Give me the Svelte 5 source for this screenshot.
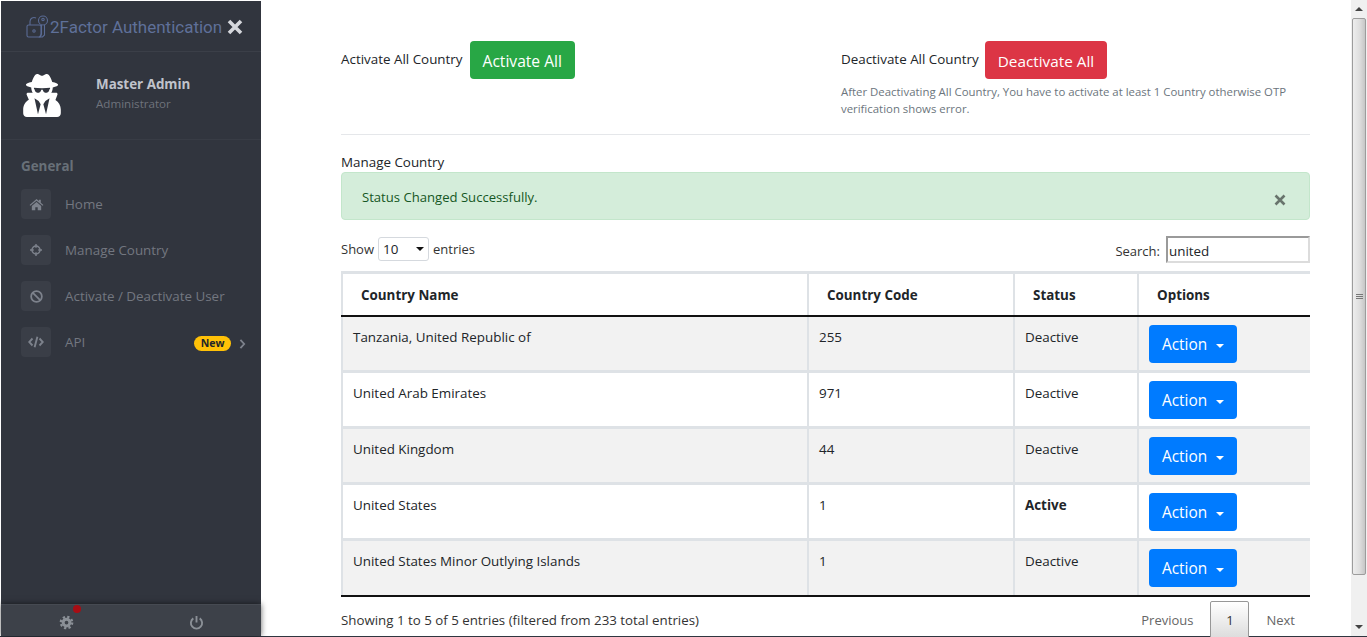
<script>
  const rows = [
    { name: 'Tanzania, United Republic of', code: '255', active: false },
    { name: 'United Arab Emirates', code: '971', active: false },
    { name: 'United Kingdom', code: '44', active: false },
    { name: 'United States', code: '1', active: true },
    { name: 'United States Minor Outlying Islands', code: '1', active: false }
  ];
</script>

<div class="window">
  <aside class="sidebar">
    <div class="brand">
      <svg class="brand-logo" viewBox="0 0 24 24" width="24" height="24" fill="none" stroke="#5a6b94" stroke-width="1.1">
        <rect x="1" y="10" width="14" height="12" rx="1.5" />
        <path d="M4 10V6.5a4 4 0 0 1 6-3.4" />
        <circle cx="8" cy="16" r="1.2" />
        <circle cx="17" cy="5.5" r="4.5" />
        <circle cx="17" cy="4.5" r="1.2" />
        <path d="M15.5 10v9l-2 3h3l2-2v-10" />
      </svg>
      <span class="brand-name">2Factor Authentication</span>
      <svg class="brand-close" viewBox="0 0 16 16" width="16" height="16">
        <path d="M2 2l12 12M14 2L2 14" stroke="#d5d7dc" stroke-width="3.6" />
      </svg>
    </div>

    <div class="profile">
      <svg class="avatar" viewBox="0 0 448 512" width="38" height="43" fill="#fff">
        <path d="M383.9 308.3l23.9-62.6c4-10.5-3.7-21.7-15-21.7h-58.5c11-18.9 17.8-40.6 17.8-64v-.3c39.2-7.8 64-19.1 64-31.7 0-13.3-27.3-25.1-70.1-33-9.2-32.8-27-65.8-40.6-82.8-9.5-11.9-25.9-15.6-39.5-8.8l-27.6 13.8c-9 4.5-19.6 4.5-28.6 0L182.1 3.4c-13.6-6.8-30-3.1-39.5 8.8-13.5 17-31.4 50-40.6 82.8-42.7 7.9-70 19.7-70 33 0 12.6 24.8 23.9 64 31.7v.3c0 23.4 6.8 45.1 17.8 64H56.3c-11.5 0-19.2 11.7-14.7 22.3l25.8 60.2C27.3 329.8 0 372.7 0 422.4v44.8C0 491.9 20.1 512 44.8 512h358.4c24.7 0 44.8-20.1 44.8-44.8v-44.8c0-48.4-25.8-90.4-64.1-114.1zM176 480l-41.6-192 49.6 32 24 40-32 120zm96 0l-32-120 24-40 49.6-32L272 480zm41.7-298.5c-3.9 11.9-7 24.6-16.5 33.4-10.1 9.3-48 22.4-64-25-2.8-8.4-15.4-8.4-18.3 0-17 50.2-56 32.4-64 25-9.5-8.8-12.7-21.5-16.5-33.4-.8-2.5-6.3-5.7-6.3-5.8v-10.8c28.3 3.6 61 5.8 96 5.8s67.7-2.1 96-5.8v10.8c-.1.1-5.6 3.2-6.4 5.8z" />
      </svg>
      <div class="who">
        <strong>Master Admin</strong>
        <span>Administrator</span>
      </div>
    </div>

    <div class="nav-title">General</div>
    <nav>
      <a class="nav-item">
        <span class="nav-icon">
          <svg viewBox="0 0 16 16" width="15" height="15" fill="#7d828c"><path d="M8 2.2L.6 8.4l.9 1L8 4l6.5 5.4.9-1L12.6 6V3h-2v1.3zM3 9.6V14h3.7v-3h2.6v3H13V9.6L8 5.4z" /></svg>
        </span>
        <span>Home</span>
      </a>
      <a class="nav-item">
        <span class="nav-icon">
          <svg viewBox="0 0 16 16" width="12" height="12" fill="none" stroke="#7d828c" stroke-width="1.9"><circle cx="8" cy="8" r="5.4" /><path d="M8 0v5M8 11v5M0 8h5M11 8h5" /></svg>
        </span>
        <span>Manage Country</span>
      </a>
      <a class="nav-item">
        <span class="nav-icon">
          <svg viewBox="0 0 16 16" width="13" height="13" fill="none" stroke="#7d828c" stroke-width="2.2"><circle cx="8" cy="8" r="6.6" /><path d="M3.5 3.5l9 9" /></svg>
        </span>
        <span>Activate / Deactivate User</span>
      </a>
      <a class="nav-item">
        <span class="nav-icon">
          <svg viewBox="0 0 16 16" width="16" height="16" fill="none" stroke="#7d828c" stroke-width="1.9"><path d="M4.5 4.5L1.2 8l3.3 3.5M11.5 4.5L14.8 8l-3.3 3.5M9.4 2.8L6.6 13.2" /></svg>
        </span>
        <span>API</span>
        <span class="badge">New</span>
        <svg class="chev" viewBox="0 0 8 12" width="7" height="10" fill="none" stroke="#7d828c" stroke-width="2.2"><path d="M1.5 1l4.5 5-4.5 5" /></svg>
      </a>
    </nav>

    <div class="side-footer">
      <button class="foot-btn" aria-label="Settings">
        <svg viewBox="0 0 16 16" width="15" height="15" fill="none" stroke="#8b9097"><circle cx="8" cy="8" r="3.6" stroke-width="3.2" /><circle cx="8" cy="8" r="6.1" stroke-width="2.4" stroke-dasharray="2.4 2.4" /></svg>
        <i class="dot"></i>
      </button>
      <button class="foot-btn" aria-label="Log out">
        <svg viewBox="0 0 16 16" width="15" height="15" fill="none" stroke="#8b9097" stroke-width="2"><path d="M4.6 3.6a6 6 0 1 0 6.8 0M8 1v7" /></svg>
      </button>
    </div>
  </aside>

  <main class="content">
    <div class="bulk">
      <div class="bulk-col">
        <div class="bulk-row first">
          <span class="bulk-label">Activate All Country</span>
          <button class="btn green">Activate All</button>
        </div>
      </div>
      <div class="bulk-col">
        <div class="bulk-row">
          <span class="bulk-label">Deactivate All Country</span>
          <button class="btn red">Deactivate All</button>
        </div>
        <small>After Deactivating All Country, You have to activate at least 1 Country otherwise OTP verification shows error.</small>
      </div>
    </div>
    <hr />
    <div class="section-title">Manage Country</div>
    <div class="alert">
      <span>Status Changed Successfully.</span>
      <svg viewBox="0 0 12 12" width="12" height="12"><path d="M1.5 1.5l9 9M10.5 1.5l-9 9" stroke="#68746c" stroke-width="2.6" /></svg>
    </div>

    <div class="controls">
      <label class="length">
        Show
        <span class="select">10<i></i></span>
        entries
      </label>
      <label class="search">
        <span class="search-label">Search:</span>
        <span class="search-input">united</span>
      </label>
    </div>

    <table>
      <colgroup>
        <col class="c1" /><col class="c2" /><col class="c3" /><col class="c4" />
      </colgroup>
      <thead>
        <tr>
          <th>Country Name</th>
          <th>Country Code</th>
          <th>Status</th>
          <th>Options</th>
        </tr>
      </thead>
      <tbody>
        {#each rows as row}
          <tr>
            <td>{row.name}</td>
            <td>{row.code}</td>
            <td>
              {#if row.active}<b>Active</b>{:else}Deactive{/if}
            </td>
            <td>
              <button class="btn blue">Action<i class="caret"></i></button>
            </td>
          </tr>
        {/each}
      </tbody>
    </table>

    <div class="table-foot">
      <span>Showing 1 to 5 of 5 entries (filtered from 233 total entries)</span>
      <div class="pager">
        <span>Previous</span>
        <span class="current">1</span>
        <span>Next</span>
      </div>
    </div>
  </main>

  <div class="scrollbar">
    <div class="arrow up"></div>
    <div class="thumb"><i></i></div>
    <div class="track"></div>
    <div class="arrow down"></div>
  </div>
</div>

<style>
  :global(body) {
    margin: 0;
    overflow: hidden;
    background: #fff;
  }

  .window {
    height: 637px;
    box-sizing: border-box;
    display: flex;
    padding: 1px 0 1px 1px;
    overflow: hidden;
    position: relative;
    font-family: "Open Sans", "Noto Sans", sans-serif;
    font-size: 13.4px;
    color: #212529;
    background: linear-gradient(#fff 636px, #2f3640 636px);
  }

  /* --- SIDEBAR --- */
  .sidebar {
    width: 260px;
    flex: none;
    background: #31353e;
    display: flex;
    flex-direction: column;
    position: relative;
  }

  .brand {
    height: 51px;
    box-sizing: border-box;
    border-bottom: 1px solid #3b3f48;
    display: flex;
    align-items: center;
    padding: 1px 18px 0 25px;
  }
  .brand-logo, .brand-close { flex: none; }
  .brand-name {
    font-family: Roboto, sans-serif;
    font-size: 17px;
    color: #5f7099;
    white-space: nowrap;
    flex: 1;
  }

  .profile {
    height: 88px;
    box-sizing: border-box;
    border-bottom: 1px solid #383c45;
    display: flex;
    align-items: center;
    padding: 0 0 0 22px;
    gap: 35px;
  }
  .who { display: flex; flex-direction: column; gap: 3px; margin-top: -6px; }
  .who strong { color: #c0c3cb; font-size: 13.4px; font-weight: 700; }
  .who span { color: #6f737c; font-size: 11.6px; }

  .nav-title {
    color: #687078;
    font-weight: 700;
    font-size: 13.4px;
    padding: 17px 0 0 20px;
    height: 21px;
  }

  nav { display: flex; flex-direction: column; gap: 16px; margin-top: 11px; }
  .nav-item {
    display: flex;
    align-items: center;
    height: 30px;
    padding-left: 20px;
    color: #737780;
    font-size: 13.4px;
  }
  .nav-icon {
    width: 30px;
    height: 30px;
    border-radius: 4px;
    background: #3a3e47;
    display: flex;
    align-items: center;
    justify-content: center;
    margin-right: 14px;
  }
  .badge {
    margin-left: auto;
    background: #ffc107;
    color: #212529;
    font-size: 10.5px;
    font-weight: 700;
    border-radius: 9px;
    padding: 0 6.5px;
    line-height: 15px;
    margin-top: 2px;
  }
  .chev { margin: 3px 15px 0 8px; }

  .side-footer {
    position: absolute;
    left: 0;
    right: 0;
    bottom: 0;
    height: 31px;
    background: #3d4149;
    border-top: 1px solid #464a52;
    box-shadow: 0 0 6px rgba(0, 0, 0, 0.6);
    display: flex;
  }
  .foot-btn {
    flex: 1;
    background: none;
    border: 0;
    padding: 3px 0 0;
    position: relative;
    display: flex;
    align-items: center;
    justify-content: center;
  }
  .dot {
    position: absolute;
    width: 8px;
    height: 8px;
    border-radius: 50%;
    background: #a80d14;
    top: 0;
    left: 72px;
  }

  /* --- CONTENT --- */
  .content {
    flex: 1;
    min-width: 0;
    padding: 40px 41px 0 80px;
  }

  .bulk { display: flex; min-height: 76px; }
  .bulk-col { width: 500px; flex: none; }
  .bulk-col:last-child { width: 469px; }
  .bulk-row { display: flex; align-items: flex-start; gap: 6px; }
  .bulk-row.first { gap: 7px; }
  .bulk-label { padding-top: 8px; line-height: 20px; }
  .bulk small {
    display: block;
    color: #6c757d;
    font-size: 11.4px;
    line-height: 17px;
    margin-top: 4px;
  }

  .btn {
    font: inherit;
    border: 0;
    border-radius: 4px;
    color: #fff;
    font-size: 15.4px;
    height: 38px;
    padding: 2px 13px 0;
    display: inline-flex;
    align-items: center;
    box-sizing: border-box;
  }
  .green { background: #28a745; font-size: 15.6px; }
  .red { background: #dc3545; font-size: 15.3px; }
  .blue { background: #007bff; }

  hr {
    border: 0;
    border-top: 1px solid #e5e7ea;
    margin: 17px 0 0;
  }

  .section-title { margin-top: 17px; line-height: 20px; }

  .alert {
    height: 48px;
    box-sizing: border-box;
    border: 1px solid #c3e6cb;
    border-radius: 4px;
    background: #d4edda;
    color: #155724;
    display: flex;
    align-items: center;
    justify-content: space-between;
    padding: 0 23px 0 20px;
    font-size: 13.1px;
    line-height: 1;
  }
  .alert span { margin-top: 4px; }
  .alert svg { margin-top: 8px; }

  .controls {
    display: flex;
    justify-content: space-between;
    align-items: flex-start;
    margin-top: 16px;
    height: 35px;
    color: #333;
    font-size: 13px;
  }
  .length { display: flex; align-items: center; gap: 4px; height: 26px; }
  .select {
    width: 51px;
    height: 24px;
    box-sizing: border-box;
    border: 1px solid #d5d9de;
    border-radius: 3px;
    padding: 0 0 0 4px;
    display: flex;
    align-items: center;
    position: relative;
    color: #212529;
    font-size: 13.4px;
  }
  .select i {
    position: absolute;
    right: 4px;
    top: 9px;
    border: 4px solid transparent;
    border-top: 4px solid #111;
    border-bottom: 0;
  }
  .search { display: flex; align-items: center; gap: 6px; }
  .search-label { padding-top: 2px; }
  .search-input {
    width: 144px;
    height: 27px;
    box-sizing: border-box;
    border: 2px solid #dcdcdc;
    border-top-color: #9a9a9a;
    border-left-color: #9a9a9a;
    padding: 2px 0 0 1px;
    display: flex;
    align-items: center;
    color: #212529;
    font-size: 13.4px;
  }

  table {
    width: 968px;
    table-layout: fixed;
    border-collapse: collapse;
    border-top: 3px solid #dee2e6;
  }
  .c1 { width: 466px; }
  .c2 { width: 206px; }
  .c3 { width: 124px; }
  .c4 { width: 172px; }

  th, td {
    border-left: 2px solid #dee2e6;
    text-align: left;
    vertical-align: top;
    box-sizing: border-box;
  }
  th {
    height: 43px;
    padding: 2px 0 0 18px;
    vertical-align: middle;
    font-weight: 700;
    border-bottom: 2px solid #111;
    background: #fff;
  }
  td {
    height: 56px;
    padding: 10px 10px 0 10px;
    border-bottom: 3px solid #dee2e6;
    line-height: 20px;
  }
  td:last-child { padding: 8px 0 0 10px; }
  tbody tr:nth-child(odd) td { background: #f2f2f2; }
  tbody tr:last-child td { border-bottom: 2px solid #111; }
  b { font-weight: 700; color: #212529; }

  .caret {
    display: inline-block;
    margin-left: 9px;
    margin-top: 2px;
    border: 4px solid transparent;
    border-top: 4px solid #fff;
    border-bottom: 0;
  }

  .table-foot {
    display: flex;
    justify-content: space-between;
    align-items: flex-start;
    height: 40px;
    color: #333;
    font-size: 13.3px;
  }
  .table-foot > span { padding-top: 14px; }
  .pager { display: flex; padding-top: 4px; color: #666; margin-right: 15px; font-size: 13px; }
  .pager span { padding-top: 10px; }
  .pager span:first-child { margin-right: 17px; }
  .pager span:last-child { margin-left: 17px; }
  .pager .current {
    width: 39px;
    height: 38px;
    box-sizing: border-box;
    border: 1px solid #979797;
    border-radius: 2px;
    background: linear-gradient(#fff, #dcdcdc);
    color: #333;
    text-align: center;
    padding-top: 9px;
  }

  /* --- SCROLLBAR --- */
  .scrollbar {
    width: 16px;
    flex: none;
    margin-top: -1px;
    box-sizing: border-box;
    background: #f0f0f0;
    display: flex;
    flex-direction: column;
  }
  .arrow { height: 18px; position: relative; }
  .arrow::after {
    content: '';
    position: absolute;
    left: 4px;
    top: 7px;
    border: 4px solid transparent;
    border-top: 4px solid #444;
    border-bottom: 0;
  }
  .arrow.up::after {
    border-top: 0;
    border-bottom: 4px solid #444;
  }
  .thumb {
    height: 557px;
    margin: 0 1px;
    background: linear-gradient(90deg, #ededed, #dedede 55%, #c6c6c6);
    border: 1px solid #9c9c9c;
    box-sizing: border-box;
    border-radius: 2px;
    display: flex;
    align-items: center;
    justify-content: center;
  }
  .thumb i {
    width: 7px;
    height: 6px;
    background: repeating-linear-gradient(#777 0 1px, transparent 1px 2px);
  }
  .track { flex: 1; }
</style>
